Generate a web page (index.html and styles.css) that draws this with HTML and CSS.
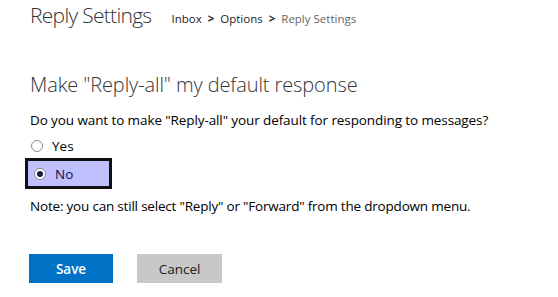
FILE: index.html
```html
<!DOCTYPE html>
<html lang="en">
<head>
    <meta charset="UTF-8">
    <title>Reply Settings</title>
    <link rel="stylesheet" href="styles.css">
</head>
<body>
    <div class="page">
        <header class="header">
            <h1 class="title">Reply Settings</h1>
            <div class="crumbs">
                <span class="crumb">Inbox</span>
                <span class="sep">&gt;</span>
                <span class="crumb">Options</span>
                <span class="sep">&gt;</span>
                <span class="crumb current">Reply Settings</span>
            </div>
        </header>

        <section class="setting">
            <h2 class="setting-title">Make "Reply-all" my default response</h2>
            <p class="question">Do you want to make "Reply-all" your default for responding to messages?</p>

            <label class="option">
                <span class="radio"></span>
                <span>Yes</span>
            </label>
            <label class="option selected">
                <span class="radio checked"></span>
                <span>No</span>
            </label>

            <p class="note">Note: you can still select "Reply" or "Forward" from the dropdown menu.</p>
        </section>

        <div class="actions">
            <div class="btn btn-save">Save</div>
            <div class="btn btn-cancel">Cancel</div>
        </div>
    </div>
</body>
</html>
```

FILE: styles.css
```css
* {
    margin: 0;
    padding: 0;
    box-sizing: border-box;
}

body {
    background: #ffffff;
    color: #000000;
    font-family: 'Open Sans', 'Noto Sans', sans-serif;
}

.page {
    padding: 0 0 0 30px;
}

/* 标题栏 */
.header {
    display: flex;
    align-items: baseline;
    gap: 20px;
    height: 30px;
}

.title {
    font-size: 21px;
    font-weight: 300;
    color: #333333;
    line-height: 30px;
    letter-spacing: -0.7px;
}

.crumbs {
    display: flex;
    gap: 6px;
    font-size: 11.5px;
    color: #222222;
}

.crumb {
    font-weight: 500;
}

.sep {
    font-weight: 700;
}

.current {
    color: #666666;
    font-weight: 400;
}

/* 设置区 */
.setting {
    padding-top: 42px;
}

.setting-title {
    font-size: 20px;
    font-weight: 300;
    color: #333333;
    line-height: 26px;
    letter-spacing: -0.1px;
}

.question {
    font-size: 13.5px;
    line-height: 18px;
    margin-top: 13px;
    letter-spacing: -0.1px;
}

.option {
    display: flex;
    align-items: center;
    gap: 9px;
    font-size: 13.5px;
    height: 22px;
    margin-top: 6px;
    padding-left: 1px;
}

.option.selected {
    width: 87px;
    height: 31px;
    margin-left: -5px;
    margin-top: 1px;
    padding-left: 6px;
    background: #c0c0ff;
    border: 3px solid #111111;
    color: #10104a;
}

.radio {
    width: 12px;
    height: 12px;
    border: 1px solid #8a8a8a;
    border-radius: 50%;
    background: #ffffff;
    display: grid;
    place-items: center;
}

.radio.checked::after {
    content: '';
    width: 6px;
    height: 6px;
    border-radius: 50%;
    background: #1a1a4a;
}

.note {
    font-size: 13.5px;
    line-height: 18px;
    margin-top: 8px;
    letter-spacing: -0.2px;
}

/* 按钮 */
.actions {
    display: flex;
    gap: 24px;
    margin-top: 39px;
    margin-left: -1px;
}

.btn {
    height: 29px;
    display: grid;
    place-items: center;
    font-size: 13.5px;
    font-weight: 600;
}

.btn-save {
    width: 84px;
    background: #0072c6;
    color: #ffffff;
}

.btn-cancel {
    width: 85px;
    background: #c8c8c8;
    color: #222222;
    font-weight: 400;
}
```
